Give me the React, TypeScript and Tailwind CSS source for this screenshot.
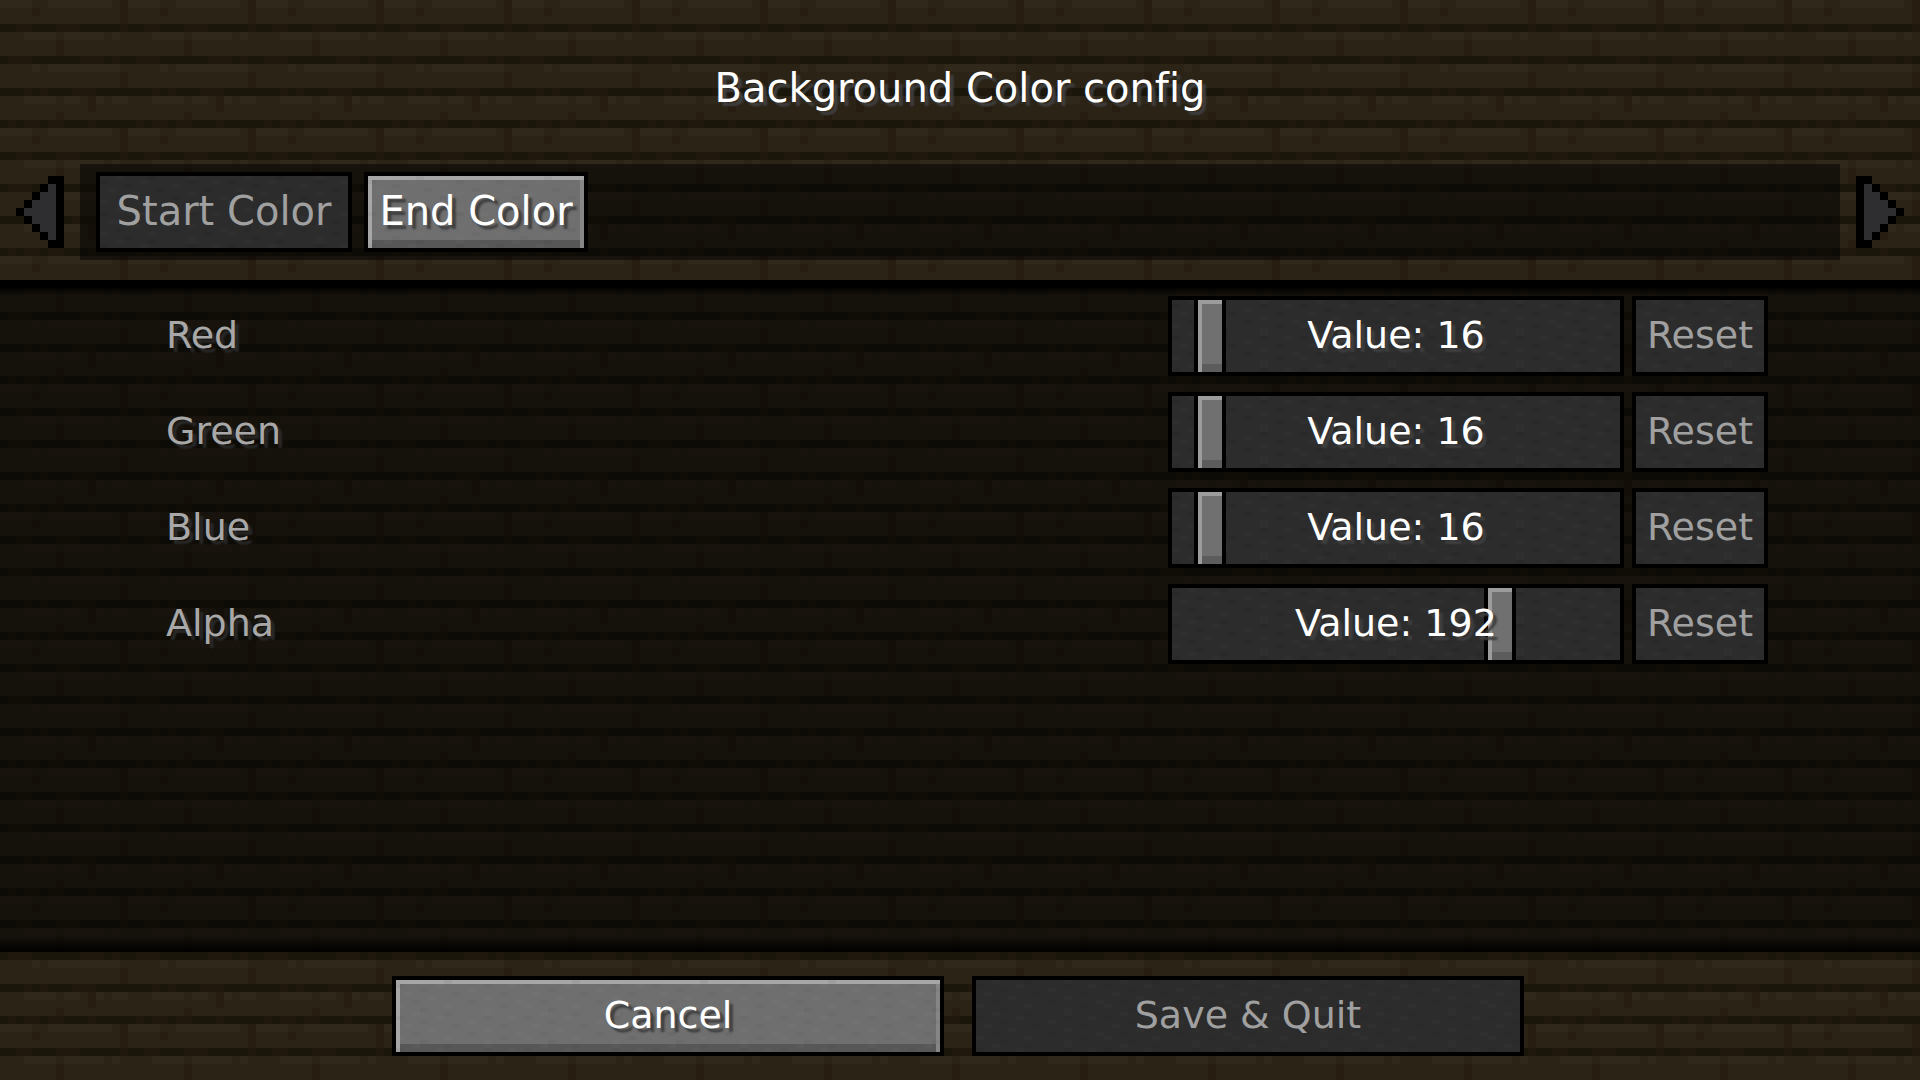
import { useState } from "react";

const FONT = "font-['DejaVu_Sans',sans-serif] [font-variant-ligatures:none]";

// 16x16 plank texture, one letter per texel
const PLANKS = [
  "aaaabbaaaaaaaabc",
  "bbbbcbbbbbbbbbbc",
  "bbbbbbbbbbbbbbbc",
  "eeddeeedddeeeeed",
  "bbbaaaabaaaaabab",
  "bbbbbbbcbbbbbbbb",
  "bbbbbbbcbbbbbbbb",
  "edddeeeeeedddede",
  "bbbbabaaaaaaaaab",
  "bbbbbbbbbbbbbbbc",
  "bbbbbbbbbbbbbbbc",
  "eeededeeedddeeee",
  "bbbaaaabaabcabaa",
  "bbbbbbbbbbbcbbbb",
  "bbbbbbbcbbbbbbbb",
  "ededdeddeeedeeee",
];

const PLANK_COLORS: Record<string, string> = {
  a: "#30281a",
  b: "#2b2316",
  c: "#271d11",
  d: "#20180c",
  e: "#1a160a",
};

const STONE = [
  "..l...d....l....",
  "d....l.....d..l.",
  "...d.....l......",
  ".l.....d.....d..",
  "....l......l....",
  "..d......d.....l",
  "l.....l......d..",
  "...d.......l....",
];

function Planks() {
  return (
    <svg className="absolute inset-0 size-full" shapeRendering="crispEdges" aria-hidden="true">
      <defs>
        <pattern id="planks" width="128" height="128" patternUnits="userSpaceOnUse">
          {PLANKS.map((row, y) =>
            row.split("").map((c, x) => (
              <rect key={`${x}-${y}`} x={x * 8} y={y * 8} width="8" height="8" fill={PLANK_COLORS[c]} />
            ))
          )}
        </pattern>
        <pattern id="stone" width="128" height="32" patternUnits="userSpaceOnUse">
          {STONE.map((row, y) =>
            row.split("").map((c, x) =>
              c === "." ? null : (
                <rect
                  key={`${x}-${y}`}
                  x={x * 8}
                  y={y * 4}
                  width="8"
                  height="4"
                  fill={c === "l" ? "#fff" : "#000"}
                  fillOpacity={c === "l" ? 0.015 : 0.04}
                />
              )
            )
          )}
        </pattern>
      </defs>
      <rect width="100%" height="100%" fill="url(#planks)" />
    </svg>
  );
}

function Stone() {
  return (
    <svg className="pointer-events-none absolute inset-0 size-full" aria-hidden="true">
      <rect width="100%" height="100%" fill="url(#stone)" />
    </svg>
  );
}

interface McButtonProps {
  label: string;
  disabled?: boolean;
  className?: string;
}

function McButton({ label, disabled = false, className = "" }: McButtonProps) {
  return (
    <button
      type="button"
      disabled={disabled}
      className={`relative h-20 border-4 border-black whitespace-nowrap ${
        disabled
          ? "bg-[#2c2c2c] text-[#a0a0a0]"
          : "bg-[#6f6f6f] text-white shadow-[inset_4px_4px_0_#a6a6a6,inset_-4px_0_0_#868686,inset_0_-8px_0_#575757] [text-shadow:4px_4px_2px_#3f3f3f]"
      } ${className}`}
    >
      <Stone />
      <span className="relative block pb-0.5 leading-none">{label}</span>
    </button>
  );
}

function Arrow({ direction }: { direction: "left" | "right" }) {
  return (
    <button type="button" aria-label={direction === "left" ? "Scroll left" : "Scroll right"} disabled className="shrink-0">
      <svg
        viewBox="0 0 6 9"
        className={`h-[72px] w-12 ${direction === "right" ? "-scale-x-100" : ""}`}
        shapeRendering="crispEdges"
      >
        <path fill="#2e2e30" d="M1 4h1v-1h1v-1h1v-1h1v7h-1v-1h-1v-1h-1v-1h-1z" />
        <path
          fill="#000"
          d="M5 0h1v9h-1zM4 0h1v1h-1zM3 1h1v1h-1zM2 2h1v1h-1zM1 3h1v1h-1zM0 4h1v1h-1zM1 5h1v1h-1zM2 6h1v1h-1zM3 7h1v1h-1zM4 8h1v1h-1z"
        />
      </svg>
    </button>
  );
}

interface ChannelProps {
  name: string;
  initial: number;
}

function Channel({ name, initial }: ChannelProps) {
  const [value, setValue] = useState(initial);
  const id = `channel-${name.toLowerCase()}`;

  return (
    <div className="flex items-center gap-2">
      <label htmlFor={id} className="flex-1 pb-0.5 leading-none text-[#a8a8a8] [text-shadow:4px_4px_2px_#2a2a2a]">
        {name}
      </label>
      <div className="relative h-20 w-[456px] border-4 border-black bg-[#2c2c2c]">
        <Stone />
        <input
          id={id}
          type="range"
          min={0}
          max={255}
          value={value}
          onChange={(e) => setValue(Number(e.target.value))}
          className="absolute inset-y-0 -left-1 h-full w-[452px] appearance-none bg-transparent [&::-webkit-slider-thumb]:h-[72px] [&::-webkit-slider-thumb]:w-8 [&::-webkit-slider-thumb]:appearance-none [&::-webkit-slider-thumb]:border-x-4 [&::-webkit-slider-thumb]:border-black [&::-webkit-slider-thumb]:bg-[#707070] [&::-webkit-slider-thumb]:shadow-[inset_4px_4px_0_#9c9c9c,inset_0_-8px_0_#5c5c5c]"
        />
        <output
          htmlFor={id}
          className="pointer-events-none absolute inset-0 flex items-center justify-center pb-0.5 leading-none text-white [text-shadow:4px_4px_2px_#3f3f3f]"
        >
          Value: {value}
        </output>
      </div>
      <McButton label="Reset" disabled className="w-[136px]" />
    </div>
  );
}

export default function App() {
  return (
    <div className={`relative flex min-h-screen flex-col bg-[#2b2316] text-[38px] ${FONT}`}>
      <Planks />

      <header className="relative h-[280px]">
        <h1 className="pt-[68px] text-center text-[40px] leading-none text-white [text-shadow:4px_4px_2px_#3f3f3f]">
          Background Color config
        </h1>
        <nav className="mt-14 flex items-center gap-4 px-4 text-[40px]">
          <Arrow direction="left" />
          <div className="flex h-24 flex-1 items-center gap-3 bg-black/50 px-4">
            <McButton label="Start Color" disabled className="w-64" />
            <McButton label="End Color" className="w-56" />
          </div>
          <Arrow direction="right" />
        </nav>
      </header>

      <main className="relative flex-1 bg-black/50">
        <div className="absolute inset-x-0 top-0 h-4 bg-linear-to-b from-black from-40% to-transparent" />
        <div className="absolute inset-x-0 bottom-0 h-4 bg-linear-to-t from-black to-transparent" />
        <div className="relative flex flex-col gap-4 pt-4 pr-[152px] pl-[166px]">
          <Channel name="Red" initial={16} />
          <Channel name="Green" initial={16} />
          <Channel name="Blue" initial={16} />
          <Channel name="Alpha" initial={192} />
        </div>
      </main>

      <footer className="relative flex h-32 justify-center gap-7 pt-6 pr-1">
        <McButton label="Cancel" className="w-[552px]" />
        <McButton label="Save & Quit" disabled className="w-[552px]" />
      </footer>
    </div>
  );
}
